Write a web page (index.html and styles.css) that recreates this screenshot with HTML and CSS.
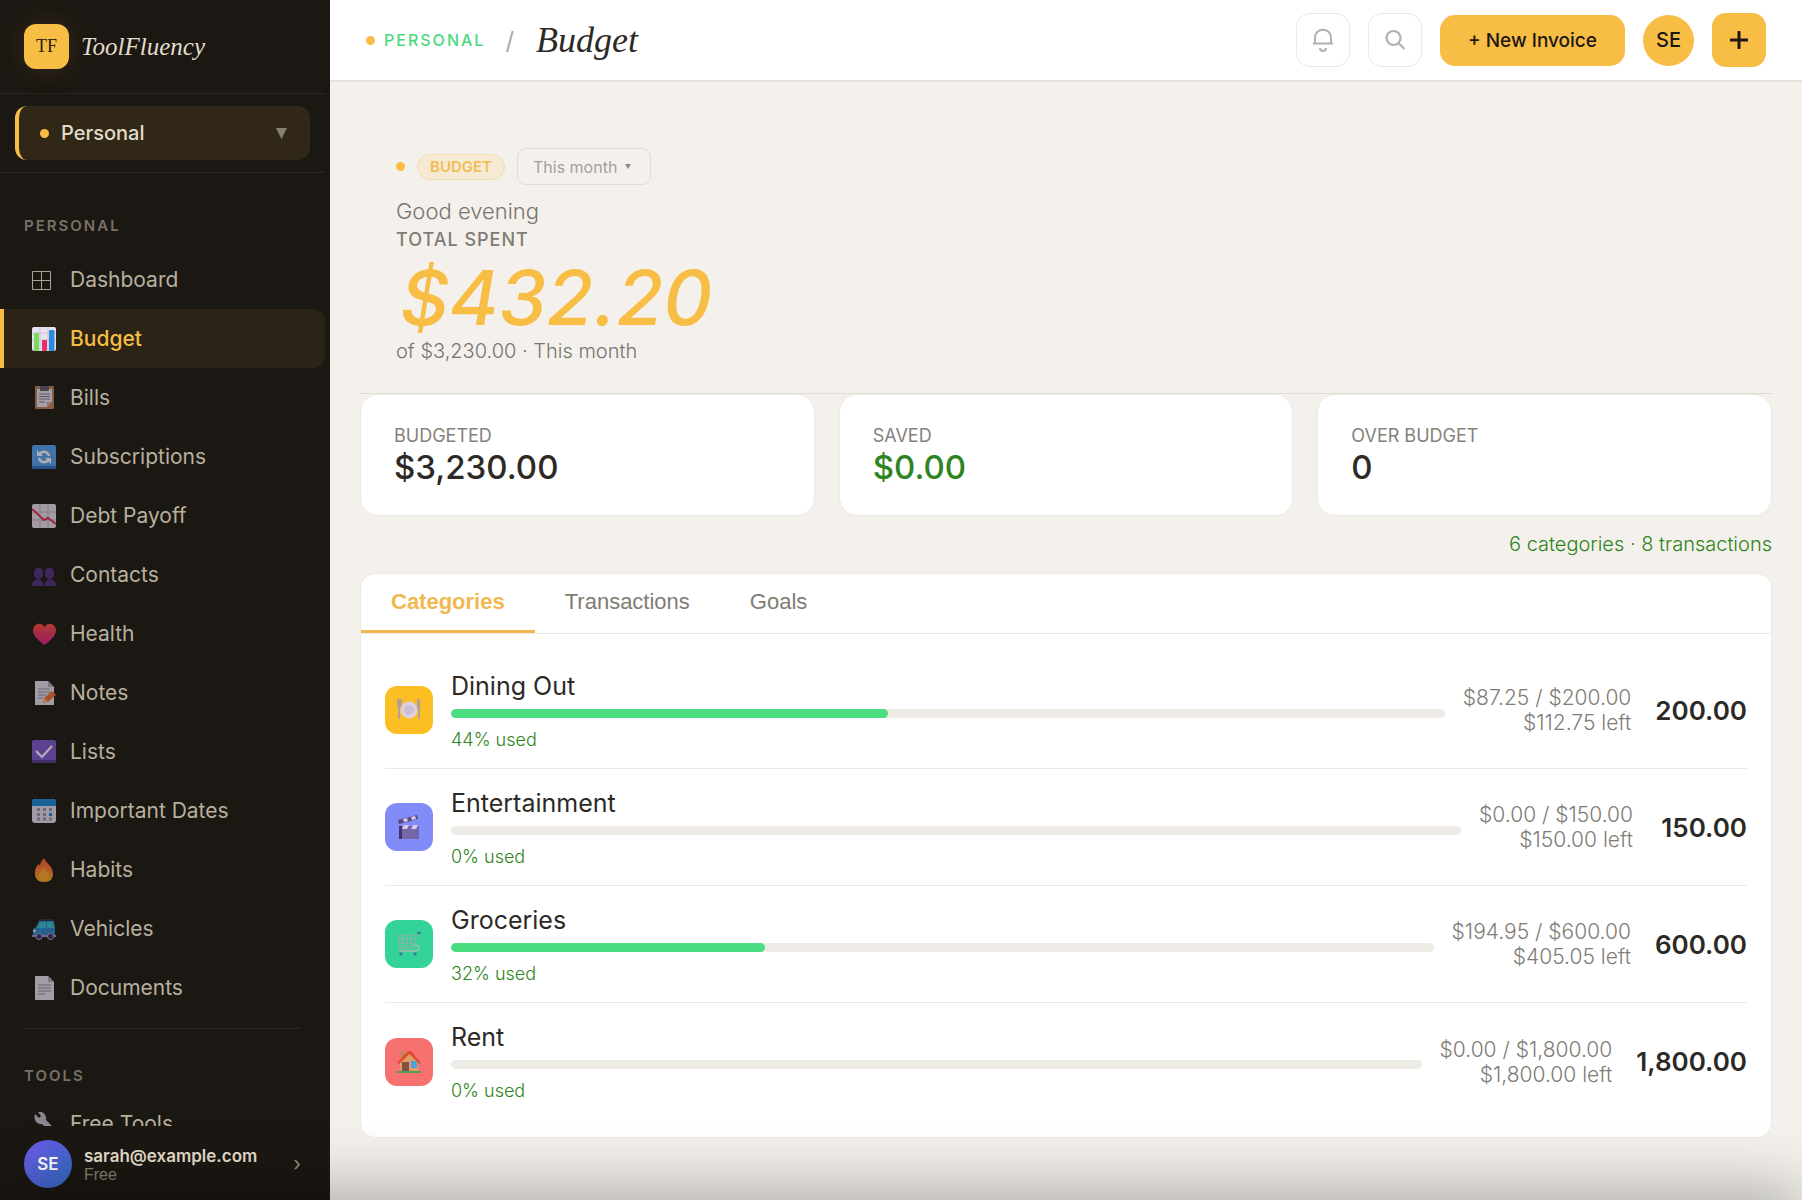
FILE: index.html
```html
<!DOCTYPE html>
<html lang="en">
<head>
    <meta charset="UTF-8">
    <meta name="viewport" content="width=device-width, initial-scale=1.0">
    <title>Budget - ToolFluency</title>
    <link rel="stylesheet" href="styles.css">
</head>
<body>
    <!-- Sidebar -->
    <aside class="sidebar">
        <div class="brand">
            <span class="brand-mark">TF</span>
            <span class="brand-name">ToolFluency</span>
        </div>
        <div class="workspace">
            <button class="workspace-btn" type="button" aria-haspopup="true">
                <span class="dot"></span>
                <span class="workspace-name">Personal</span>
                <svg width="11" height="11" viewBox="0 0 11 11"><path d="M0 0h11L5.500 11z" fill="#85806f"/></svg>
            </button>
        </div>
        <nav class="nav">
            <h2 class="nav-label">Personal</h2>
            <a class="nav-item" href="#dashboard">
                <svg class="icon" viewBox="0 0 24 24"><path d="M.5 3.500h18v18H.5zM9.500 3.500v18M.5 12.500h18" fill="none" stroke="#e8e0ce"/></svg>
                Dashboard
            </a>
            <a class="nav-item active" href="#budget">
                <svg class="icon" viewBox="0 0 24 24"><rect width="24" height="24" rx="2" fill="#e9e2ee"/><path d="M8 0v24M16 0v24M0 6h24M0 13h24" stroke="#c5bccb" stroke-width=".8"/><rect x="2" y="6" width="5" height="18" rx="1" fill="#7bd95f"/><rect x="10" y="13" width="5" height="11" rx="1" fill="#e62e6b"/><rect x="17" y="3" width="5.500" height="21" rx="1" fill="#2b8be0"/></svg>
                Budget
            </a>
            <a class="nav-item" href="#bills">
                <svg class="icon" viewBox="0 0 24 24"><rect x="3" y="0" width="19" height="23" rx="1" fill="#b47a58"/><path d="M5 3h15v13l-5 5H5z" fill="#ded8e6"/><path d="M20 16l-5 5v-5z" fill="#c89a82"/><rect x="8" y="0" width="9" height="5" rx="1" fill="#5c5666"/><path d="M7 8h11M7 10.500h11M7 13h11M7 16h6" stroke="#77708a"/></svg>
                Bills
            </a>
            <a class="nav-item" href="#subscriptions">
                <svg class="icon" viewBox="0 0 24 24"><rect width="24" height="24" rx="2" fill="#4f9bea"/><rect x="0" y="21" width="24" height="3" rx="1" fill="#2d6cb8"/><path d="M8 8.500c3-3 8-2 9 2.500M16 15.500c-3 3-8 2-9-2.500" fill="none" stroke="#f0edf4" stroke-width="2.600"/><path d="M5 5v6h6zM19 19v-6h-6z" fill="#f0edf4"/></svg>
                Subscriptions
            </a>
            <a class="nav-item" href="#debt">
                <svg class="icon" viewBox="0 0 24 24"><rect width="24" height="24" rx="2" fill="#dcd3e0"/><path d="M8 0v24M16 0v24M0 8h24M0 16h24" stroke="#aaa0b0" stroke-width=".8"/><path d="M0 5l12 11 4-2 8 6" fill="none" stroke="#d62c58" stroke-width="2"/></svg>
                Debt Payoff
            </a>
            <a class="nav-item" href="#contacts">
                <svg class="icon" viewBox="0 0 24 24"><g fill="#4d2f7d"><path d="M2 9c0-6 9-6 9 0v2c0 3-2 5-4.500 5S2 14 2 11z"/><path d="M13 9c0-6 9-6 9 0v2c0 3-2 5-4.500 5S13 14 13 11z"/><path d="M0 23c0-9 11.500-9 11.500 0zM12.500 23c0-9 11.500-9 11.500 0z"/></g></svg>
                Contacts
            </a>
            <a class="nav-item" href="#health">
                <svg class="icon" viewBox="0 0 24 24"><defs><linearGradient id="heart" x2="0" y2="1"><stop stop-color="#f0483f"/><stop offset="1" stop-color="#d0208a"/></linearGradient></defs><path d="M12.500 23C7 19 1 14 1 8.500 1 2 9-1 12.500 5 16-1 24 2 24 8.500 24 14 18 19 12.500 23z" fill="url(#heart)"/></svg>
                Health
            </a>
            <a class="nav-item" href="#notes">
                <svg class="icon" viewBox="0 0 24 24"><path d="M3 0h13l6 6v18H3z" fill="#dcd5e2"/><path d="M16 0v6h6z" fill="#a9a0b2"/><path d="M6 8h12M6 11h12M6 14h8M6 17h5" stroke="#8c849a"/><path d="M10 22l2-5 8-7 4 4-8 7z" fill="#e66a34"/><path d="M10 22l2-5 4 4z" fill="#e9b48e"/></svg>
                Notes
            </a>
            <a class="nav-item" href="#lists">
                <svg class="icon" viewBox="0 0 24 24"><rect width="24" height="23" rx="2" fill="#7754c4"/><rect y="20" width="24" height="3" rx="1" fill="#52398c"/><path d="M4 11l6 6L20 6" fill="none" stroke="#f4f0fa" stroke-width="2.200"/></svg>
                Lists
            </a>
            <a class="nav-item" href="#dates">
                <svg class="icon" viewBox="0 0 24 24"><rect width="24" height="24" rx="3" fill="#d8d2e4"/><path d="M0 7V3c0-2 1-3 3-3h18c2 0 3 1 3 3v4z" fill="#1783d0"/><g fill="#938ba2"><path d="M5 9h3v3H5zM11 9h3v3h-3zM17 9h3v3h-3zM5 14h3v3H5zM11 14h3v3h-3zM5 18.500h3v3H5zM11 18.500h3v3h-3zM17 18.500h3v3h-3z"/></g><path d="M17 14h3v3h-3z" fill="#1783d0"/></svg>
                Important Dates
            </a>
            <a class="nav-item" href="#habits">
                <svg class="icon" viewBox="0 0 24 24"><defs><linearGradient id="fire" x2="0" y2="1"><stop stop-color="#f0503a"/><stop offset="1" stop-color="#f5a51e"/></linearGradient></defs><path d="M12 0c2 5 9 8 9 16 0 5-3 8-9 8s-9-3-9-9c0-4 1-7 4-9l1 2c0-3 2-6 4-8z" fill="url(#fire)"/><path d="M12 9c1 4 5 5 5 9 0 3-2 5-5 5s-5-2-5-5c0-4 4-5 5-9z" fill="#f7a02a"/></svg>
                Habits
            </a>
            <a class="nav-item" href="#vehicles">
                <svg class="icon" viewBox="0 0 24 24"><path d="M1 12l3-2 3-6h15l1 7v8H1z" fill="#2c7fc4"/><path d="M8 5h6v6H5zM15 5h6l1 6h-7z" fill="#38b3c4"/><path d="M7 3h14" stroke="#37507a"/><path d="M0 18h24v2H0z" fill="#9a86c4"/><g fill="#33306a" stroke="#a59acb"><circle cx="7" cy="19.500" r="3"/><circle cx="18.500" cy="19.500" r="3"/></g><circle cx="2.500" cy="14" r="1.300" fill="#e8dfe8"/></svg>
                Vehicles
            </a>
            <a class="nav-item" href="#documents">
                <svg class="icon" viewBox="0 0 24 24"><path d="M3 0h13l6 6v18H3z" fill="#dcd5e2"/><path d="M16 0v6h6z" fill="#a9a0b2"/><path d="M6 9h13M6 12h13M6 15h13M6 18h7" stroke="#8c849a"/></svg>
                Documents
            </a>
            <hr class="nav-divider">
            <h2 class="nav-label tools">Tools</h2>
            <a class="nav-item" href="#tools">
                <svg class="icon" viewBox="0 0 24 24"><path d="M3 2l4 4 2-2-3-4c5-1 9 3 8 8l9 9c2 3-1 6-4 4l-9-9C5 13 1 8 3 2z" fill="#bdb4c2"/></svg>
                Free Tools
            </a>
        </nav>
        <button class="account" type="button">
            <span class="account-avatar">SE</span>
            <span class="account-text">
                <span class="account-email">sarah@example.com</span>
                <span class="account-plan">Free</span>
            </span>
            <span class="account-arrow">›</span>
        </button>
    </aside>

    <div class="page">
        <!-- Top bar -->
        <header class="topbar">
            <span class="dot"></span>
            <span class="crumb">Personal</span>
            <span class="crumb-sep">/</span>
            <h1 class="title">Budget</h1>
            <div class="actions">
                <button class="icon-btn" type="button" aria-label="Notifications">
                    <svg width="22" height="26" viewBox="0 0 22 26" fill="none" stroke="#b3b1ae" stroke-width="2"><path d="M1 16.500h20M3 16.500V11c0-11 16-11 16 0v5.500"/><path d="M8 21c0 4 6 4 6 0"/></svg>
                </button>
                <button class="icon-btn" type="button" aria-label="Search">
                    <svg width="22" height="22" viewBox="0 0 22 22" fill="none" stroke="#b3b1ae" stroke-width="2.200"><circle cx="9.500" cy="9" r="7"/><path d="M14.500 14l6 6"/></svg>
                </button>
                <button class="primary-btn" type="button">+ New Invoice</button>
                <button class="avatar-btn" type="button">SE</button>
                <button class="add-btn" type="button" aria-label="Add">
                    <svg width="18" height="18" viewBox="0 0 18 18"><path d="M9 1v16M1 9h16" stroke="#1b1712" stroke-width="3" stroke-linecap="round"/></svg>
                </button>
            </div>
        </header>

        <main class="content">
            <!-- Summary -->
            <section class="hero">
                <div class="hero-tags">
                    <span class="dot"></span>
                    <span class="badge">Budget</span>
                    <div class="period">
                        <select aria-label="Period">
                            <option>This month</option>
                            <option>Last month</option>
                            <option>This year</option>
                        </select>
                        <svg class="period-arrow" width="6" height="5" viewBox="0 0 6 5"><path d="M0 0h6L3 5z" fill="#8f8b84"/></svg>
                    </div>
                </div>
                <p class="greeting">Good evening</p>
                <p class="hero-label">Total spent</p>
                <p class="hero-amount">$432.20</p>
                <p class="hero-note">of $3,230.00 · This month</p>
            </section>

            <section class="stats">
                <div class="stat">
                    <p class="stat-label">Budgeted</p>
                    <p class="stat-value">$3,230.00</p>
                </div>
                <div class="stat">
                    <p class="stat-label">Saved</p>
                    <p class="stat-value good">$0.00</p>
                </div>
                <div class="stat">
                    <p class="stat-label">Over budget</p>
                    <p class="stat-value">0</p>
                </div>
            </section>
            <p class="counts">6 categories · 8 transactions</p>

            <!-- Categories -->
            <section class="panel">
                <div class="tabs">
                    <button class="tab selected" type="button">Categories</button>
                    <button class="tab" type="button">Transactions</button>
                    <button class="tab" type="button">Goals</button>
                </div>
                <ul class="categories">
                    <li class="category">
                        <span class="category-icon dining">
                            <svg class="icon" viewBox="0 0 24 24"><path d="M2 1v20M22 1v20" stroke="#b5a194" stroke-width="2"/><path d="M0 1h5v6c0 3-5 3-5 0zM20 1c4 0 4 9 2 11h-2z" fill="#b5a194"/><circle cx="12" cy="12" r="8.500" fill="#ded0e0"/><circle cx="12" cy="12" r="5" fill="#cfbed4"/></svg>
                        </span>
                        <div class="category-main">
                            <h3>Dining Out</h3>
                            <div class="bar"><div class="bar-fill" style="width: 44%"></div></div>
                            <p>44% used</p>
                        </div>
                        <div class="category-detail">$87.25 / $200.00<br>$112.75 left</div>
                        <div class="category-total">200.00</div>
                    </li>
                    <li class="category">
                        <span class="category-icon fun">
                            <svg class="icon" viewBox="0 0 24 24"><path d="M2 11h20v13H2z" fill="#7367a8"/><path d="M2 11h3v13H2z" fill="#43346f"/><path d="M1 5l19-5 1 4-19 5z" fill="#594a80"/><path d="M6 4l4-1 1 3-4 1zM14 2l4-1 1 3-4 1zM7 10h5l-2 4H5zM16 10h5l-2 4h-5z" fill="#d5caeb"/></svg>
                        </span>
                        <div class="category-main">
                            <h3>Entertainment</h3>
                            <div class="bar"><div class="bar-fill" style="width: 0%"></div></div>
                            <p>0% used</p>
                        </div>
                        <div class="category-detail">$0.00 / $150.00<br>$150.00 left</div>
                        <div class="category-total">150.00</div>
                    </li>
                    <li class="category">
                        <span class="category-icon groceries">
                            <svg class="icon" viewBox="0 0 24 24"><path d="M23 1h-3l-3 15H3L1 3h17M1 7h17M2 11h16M6 3v13M10 3v13M14 3v13" fill="none" stroke="#8bb3a6" stroke-width="1.200"/><path d="M17 13c6-1 6 6 2 6H2" fill="none" stroke="#a4b9b1" stroke-width="1.500"/><circle cx="4" cy="22" r="1.700" fill="#397fa4"/><circle cx="18" cy="22" r="1.700" fill="#397fa4"/><path d="M20 1h4" stroke="#397f88" stroke-width="2"/></svg>
                        </span>
                        <div class="category-main">
                            <h3>Groceries</h3>
                            <div class="bar"><div class="bar-fill" style="width: 32%"></div></div>
                            <p>32% used</p>
                        </div>
                        <div class="category-detail">$194.95 / $600.00<br>$405.05 left</div>
                        <div class="category-total">600.00</div>
                    </li>
                    <li class="category">
                        <span class="category-icon rent">
                            <svg class="icon" viewBox="0 0 24 24"><path d="M4 1h4v8H4z" fill="#bd865c"/><path d="M3 11l9-9 9 9v11H3z" fill="#df9b68"/><path d="M0 13L11 1h3l10 12-2 1L12.500 4 2 14z" fill="#de4c2c"/><path d="M5 12h7v10H5z" fill="#855044"/><path d="M14 11h6v7h-6z" fill="#4d9fe4"/><path d="M0 21h24v2H0z" fill="#4f9c5a"/></svg>
                        </span>
                        <div class="category-main">
                            <h3>Rent</h3>
                            <div class="bar"><div class="bar-fill" style="width: 0%"></div></div>
                            <p>0% used</p>
                        </div>
                        <div class="category-detail">$0.00 / $1,800.00<br>$1,800.00 left</div>
                        <div class="category-total">1,800.00</div>
                    </li>
                </ul>
            </section>
        </main>
    </div>
    <!-- Bottom sheet, closed -->
    <div class="sheet"></div>
</body>
</html>
```

FILE: styles.css
```css
* {
    box-sizing: border-box;
}
body {
    margin: 0;
    display: flex;
    min-height: 100vh;
    background: #f4f1ec;
    color: #2d2a26;
    font-family: Inter, "Noto Sans", sans-serif;
}
h1, h2, h3, p, ul {
    margin: 0;
    padding: 0;
}
button {
    font-family: inherit;
    border: none;
    padding: 0;
    cursor: pointer;
}
.dot {
    width: 9px;
    height: 9px;
    border-radius: 50%;
    background: #f7bd45;
    flex: none;
}
.icon {
    width: 24px;
    height: 24px;
    flex: none;
}

/* Sidebar */
.sidebar {
    width: 330px;
    height: 100vh;
    position: sticky;
    top: 0;
    flex: none;
    display: flex;
    flex-direction: column;
    padding-right: 5px;
    background: #1b1712;
}
.brand {
    display: flex;
    align-items: center;
    gap: 12px;
    padding: 24px;
    border-bottom: 1px solid #2b2721;
}
.brand-mark {
    width: 45px;
    height: 45px;
    border-radius: 12px;
    background: #f7bd45;
    box-shadow: 0 0 30px rgba(247, 189, 69, 0.12);
    color: #2a2010;
    font: 18px/45px "Liberation Serif", serif;
    text-align: center;
}
.brand-name {
    color: #e2dccb;
    font: italic 25px/32px "Liberation Serif", serif;
}
.workspace {
    padding: 12px 15px;
    border-bottom: 1px solid #2b2721;
}
.workspace-btn {
    width: 100%;
    height: 54px;
    display: flex;
    align-items: center;
    gap: 12px;
    padding: 0 23px 0 21px;
    border-left: 4px solid #f7bd45;
    border-radius: 12px;
    background: #302717;
    color: #e2dccb;
    font-size: 20px;
    font-weight: 500;
    text-align: left;
}
.workspace-name {
    flex: 1;
}
.nav {
    flex: 1;
    min-height: 0;
    overflow: hidden;
}
.nav-label {
    padding: 41px 24px 12px;
    color: #787166;
    font-size: 15px;
    font-weight: 600;
    line-height: 24px;
    letter-spacing: 2px;
    text-transform: uppercase;
}
.nav-label.tools {
    padding: 35px 24px 6px;
}
.nav-item {
    height: 59px;
    display: flex;
    align-items: center;
    gap: 14px;
    padding-left: 28px;
    border-left: 4px solid transparent;
    border-radius: 0 12px 12px 0;
    color: #b8b09e;
    font-size: 21px;
    text-decoration: none;
}
.nav-item .icon {
    opacity: 0.7;
}
.nav-item.active {
    background: #2c2317;
    border-left-color: #f7bd45;
    color: #f7bd45;
    font-weight: 500;
}
.nav-item.active .icon {
    opacity: 1;
}
.nav-divider {
    height: 1px;
    margin: 11px 24px 0;
    border: none;
    background: #2b2721;
}
.account {
    height: 74px;
    flex: none;
    display: flex;
    align-items: center;
    gap: 12px;
    padding: 2px 24px 0;
    background: #1b1712;
    color: #e2dccb;
    text-align: left;
}
.account-avatar {
    width: 48px;
    height: 48px;
    border-radius: 50%;
    background: linear-gradient(135deg, #6f5ae8, #2f6cc0);
    color: #fff;
    font-size: 17px;
    font-weight: 600;
    line-height: 48px;
    text-align: center;
}
.account-text {
    flex: 1;
}
.account-email, .account-plan {
    display: block;
    font-size: 17px;
    font-weight: 600;
    line-height: 20px;
}
.account-plan {
    color: #857e71;
    font: 16px/17px "Liberation Sans", sans-serif;
}
.account-arrow {
    color: #99927f;
    font-size: 20px;
}

/* Top bar */
.page {
    flex: 1;
    min-width: 0;
}
.topbar {
    height: 81px;
    display: flex;
    align-items: center;
    padding: 0 36px;
    background: #fff;
    border-bottom: 1px solid #e3e0da;
    box-shadow: 0 1px 2px rgba(0, 0, 0, 0.05);
}
.crumb {
    margin-left: 9px;
    color: #4ad97e;
    font-size: 16px;
    font-weight: 500;
    letter-spacing: 2px;
    text-transform: uppercase;
}
.crumb-sep {
    margin: 0 22px 0 20px;
    color: #aaa8a4;
    font-size: 24px;
}
.title {
    font: italic 36px/44px "Liberation Serif", serif;
}
.actions {
    display: flex;
    align-items: center;
    gap: 18px;
    margin-left: auto;
}
.icon-btn, .add-btn {
    width: 54px;
    height: 54px;
    display: flex;
    align-items: center;
    justify-content: center;
    border: 1px solid #eceae7;
    border-radius: 14px;
    background: #fff;
}
.add-btn {
    border: none;
    background: #f7bd45;
}
.primary-btn, .avatar-btn {
    height: 51px;
    padding: 0 28px;
    border-radius: 15px;
    background: #f7bd45;
    color: #1b1712;
    font-size: 19px;
    font-weight: 500;
}
.avatar-btn {
    width: 51px;
    padding: 0;
    border-radius: 50%;
    font-size: 20px;
}

/* Summary */
.content {
    padding: 30px;
}
.hero {
    padding: 37px 36px 29px;
    border-bottom: 1px solid #e0ddd7;
}
.hero-tags {
    display: flex;
    align-items: center;
    gap: 12px;
}
.badge {
    padding: 0 12px;
    border: 1px solid #f3dcae;
    border-radius: 13px;
    background: #f7ead3;
    color: #f3bd55;
    font-size: 15px;
    font-weight: 600;
    line-height: 24px;
    text-transform: uppercase;
}
.period {
    position: relative;
}
.period select {
    width: 134px;
    height: 37px;
    padding: 0 15px;
    appearance: none;
    border: 1px solid #e0ddd7;
    border-radius: 9px;
    background: transparent;
    color: #a3a09a;
    font-family: inherit;
    font-size: 16px;
}
.period-arrow {
    position: absolute;
    right: 20px;
    top: 16px;
}
.greeting {
    margin-top: 12px;
    color: #78746d;
    font-size: 22px;
    font-weight: 300;
    line-height: 28px;
}
.hero-label {
    color: #807b73;
    font-size: 18px;
    font-weight: 500;
    line-height: 30px;
    letter-spacing: 1px;
    text-transform: uppercase;
}
.hero-amount {
    padding-left: 4px;
    color: #f7bd45;
    font-size: 76px;
    font-style: italic;
    font-weight: 500;
    line-height: 84px;
}
.hero-note {
    color: #78746d;
    font-size: 20px;
    font-weight: 300;
    line-height: 25px;
}
.stats {
    display: grid;
    grid-template-columns: repeat(3, 1fr);
    gap: 24px;
}
.stat {
    padding: 29px 33px;
    border: 1px solid #eceae6;
    border-radius: 18px;
    background: #fff;
}
.stat-label {
    color: #85817a;
    font-size: 18px;
    line-height: 24px;
    text-transform: uppercase;
}
.stat-value {
    font-size: 33px;
    font-weight: 500;
    line-height: 38px;
}
.good {
    color: #2e8420;
}
.counts {
    padding: 15px 0 16px;
    color: #2e8420;
    font-size: 20px;
    font-weight: 300;
    line-height: 26px;
    text-align: right;
}

/* Categories */
.panel {
    border: 1px solid #eceae6;
    border-radius: 15px;
    background: #fff;
}
.tabs {
    display: flex;
    border-bottom: 1px solid #eceae6;
}
.tab {
    height: 59px;
    padding: 0 30px;
    border-bottom: 3px solid transparent;
    background: none;
    color: #807c75;
    font: 22px "Liberation Sans", sans-serif;
}
.tab.selected {
    border-bottom-color: #efb950;
    color: #efb950;
    font-weight: bold;
}
.categories {
    list-style: none;
    padding: 18px 24px 17px;
}
.category {
    display: flex;
    align-items: center;
    gap: 18px;
    min-height: 117px;
    border-bottom: 1px solid #eceae6;
}
.category:last-child {
    border-bottom: none;
}
.category-icon {
    width: 48px;
    height: 48px;
    display: flex;
    align-items: center;
    justify-content: center;
    border-radius: 12px;
}
.dining {
    background: #fbbf24;
}
.fun {
    background: #818cf8;
}
.groceries {
    background: #34d399;
}
.rent {
    background: #f87171;
}
.category-main {
    flex: 1;
}
.category-main h3 {
    font-size: 25px;
    font-weight: 400;
    line-height: 36px;
}
.category-main p {
    margin-top: 9px;
    color: #2e8420;
    font-size: 18px;
    font-weight: 300;
    line-height: 26px;
}
.bar {
    height: 9px;
    margin-top: 5px;
    border-radius: 5px;
    background: #efece7;
    overflow: hidden;
}
.bar-fill {
    height: 100%;
    border-radius: 5px;
    background: #4ade80;
}
.category-detail {
    color: #807c75;
    font-size: 21px;
    font-weight: 300;
    line-height: 25px;
    text-align: right;
}
.category-total {
    min-width: 90px;
    margin-left: 6px;
    font-size: 26px;
    font-weight: 600;
    text-align: right;
}

.sheet {
    position: fixed;
    top: 100%;
    left: 0;
    right: 0;
    height: 200px;
    box-shadow: 0 -10px 60px rgba(0, 0, 0, 0.3);
    pointer-events: none;
}
```
